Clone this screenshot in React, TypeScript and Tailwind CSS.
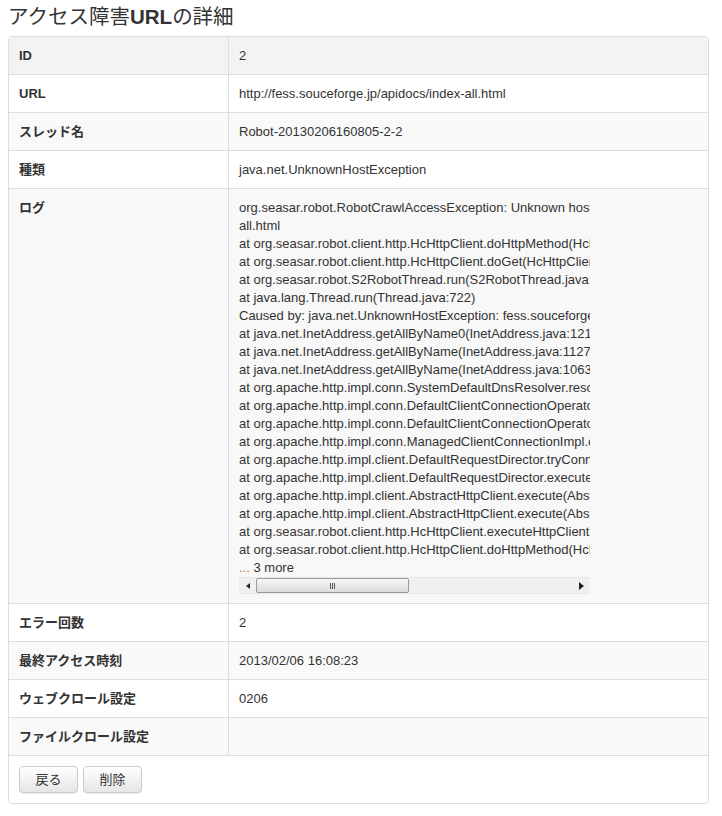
import React from 'react';

const logLines = [
  'org.seasar.robot.RobotCrawlAccessException: Unknown host fess.souceforge.jp: http://fess.souceforge.jp/apidocs/index-',
  'all.html',
  'at org.seasar.robot.client.http.HcHttpClient.doHttpMethod(HcHttpClient.java:292)',
  'at org.seasar.robot.client.http.HcHttpClient.doGet(HcHttpClient.java:253)',
  'at org.seasar.robot.S2RobotThread.run(S2RobotThread.java:136)',
  'at java.lang.Thread.run(Thread.java:722)',
  'Caused by: java.net.UnknownHostException: fess.souceforge.jp',
  'at java.net.InetAddress.getAllByName0(InetAddress.java:1216)',
  'at java.net.InetAddress.getAllByName(InetAddress.java:1127)',
  'at java.net.InetAddress.getAllByName(InetAddress.java:1063)',
  'at org.apache.http.impl.conn.SystemDefaultDnsResolver.resolve(SystemDefaultDnsResolver.java:45)',
  'at org.apache.http.impl.conn.DefaultClientConnectionOperator.resolveHostname(DefaultClientConnectionOperator.java:259)',
  'at org.apache.http.impl.conn.DefaultClientConnectionOperator.openConnection(DefaultClientConnectionOperator.java:159)',
  'at org.apache.http.impl.conn.ManagedClientConnectionImpl.open(ManagedClientConnectionImpl.java:304)',
  'at org.apache.http.impl.client.DefaultRequestDirector.tryConnect(DefaultRequestDirector.java:610)',
  'at org.apache.http.impl.client.DefaultRequestDirector.execute(DefaultRequestDirector.java:445)',
  'at org.apache.http.impl.client.AbstractHttpClient.execute(AbstractHttpClient.java:863)',
  'at org.apache.http.impl.client.AbstractHttpClient.execute(AbstractHttpClient.java:57)',
  'at org.seasar.robot.client.http.HcHttpClient.executeHttpClient(HcHttpClient.java:673)',
  'at org.seasar.robot.client.http.HcHttpClient.doHttpMethod(HcHttpClient.java:419)',
];

const font = { fontFamily: '"Liberation Sans", "Noto Sans CJK JP", sans-serif' };

const Row: React.FC<{ label: string; bg: string; children?: React.ReactNode }> = ({ label, bg, children }) => (
  <div className={`grid grid-cols-[220px_1fr] border-b border-[#dddddd] ${bg}`}>
    <div className="px-[10px] py-[9px] border-r border-[#dddddd] font-bold text-[13px] leading-[19px] text-[#333333]">
      {label}
    </div>
    <div className="px-[10px] py-[9px] text-[13px] leading-[19px] text-[#333333]">{children}</div>
  </div>
);

const Scrollbar: React.FC = () => (
  <div className="h-[17px] bg-[#f0f0f0] border-y border-[#e8e8e8] flex items-center">
    <div className="w-[17px] h-full flex items-center justify-center">
      <div className="w-0 h-0 border-y-[3px] border-y-transparent border-r-[4px] border-r-[#222222]" />
    </div>
    <div className="w-[153px] h-[15px] rounded-[2px] border border-[#9a9a9a] bg-[linear-gradient(#f7f7f7,#dcdcdc)] flex items-center justify-center">
      <div className="flex gap-[1px]">
        <div className="w-[1px] h-[6px] bg-[#555555]" />
        <div className="w-[1px] h-[6px] bg-[#555555]" />
        <div className="w-[1px] h-[6px] bg-[#555555]" />
      </div>
    </div>
    <div className="flex-1" />
    <div className="w-[17px] h-full flex items-center justify-center">
      <div className="w-0 h-0 border-y-[4px] border-y-transparent border-l-[5px] border-l-[#222222]" />
    </div>
  </div>
);

export default function App() {
  return (
    <div className="w-[722px] min-h-[816px] bg-white px-[8px] pt-[5px]" style={font}>
      <h3 className="text-[20.5px] leading-[24px] text-[#333333] mb-[7px]">
        アクセス障害<span className="font-bold">URL</span>の詳細
      </h3>

      <div className="w-[701px] border border-[#dddddd] rounded-[4px] overflow-hidden">
        <Row label="ID" bg="bg-[#f3f3f3]">2</Row>
        <Row label="URL" bg="bg-white">http://fess.souceforge.jp/apidocs/index-all.html</Row>
        <Row label="スレッド名" bg="bg-[#f9f9f9]">Robot-20130206160805-2-2</Row>
        <Row label="種類" bg="bg-white">java.net.UnknownHostException</Row>
        <Row label="ログ" bg="bg-[#f8f8f8]">
          <div className="w-[351px] pt-[1px]">
            <div className="overflow-hidden whitespace-nowrap leading-[18px]">
              {logLines.map((l, i) => (
                <div key={i}>{l}</div>
              ))}
              <div>
                <span className="text-[#c87533]">...</span> 3 more
              </div>
            </div>
            <Scrollbar />
          </div>
        </Row>
        <Row label="エラー回数" bg="bg-white">2</Row>
        <Row label="最終アクセス時刻" bg="bg-[#f9f9f9]">2013/02/06 16:08:23</Row>
        <Row label="ウェブクロール設定" bg="bg-white">0206</Row>
        <Row label="ファイルクロール設定" bg="bg-[#f9f9f9]" />
        <div className="flex gap-[5px] px-[10px] pt-[10px] pb-[10px]">
          {['戻る', '削除'].map((t) => (
            <button
              key={t}
              className="w-[59px] h-[27px] rounded-[4px] border border-[#cccccc] bg-[linear-gradient(#ffffff,#e6e6e6)] shadow-[0_1px_1px_rgba(0,0,0,0.08)] text-[13px] text-[#333333]"
            >
              {t}
            </button>
          ))}
        </div>
      </div>
    </div>
  );
}
